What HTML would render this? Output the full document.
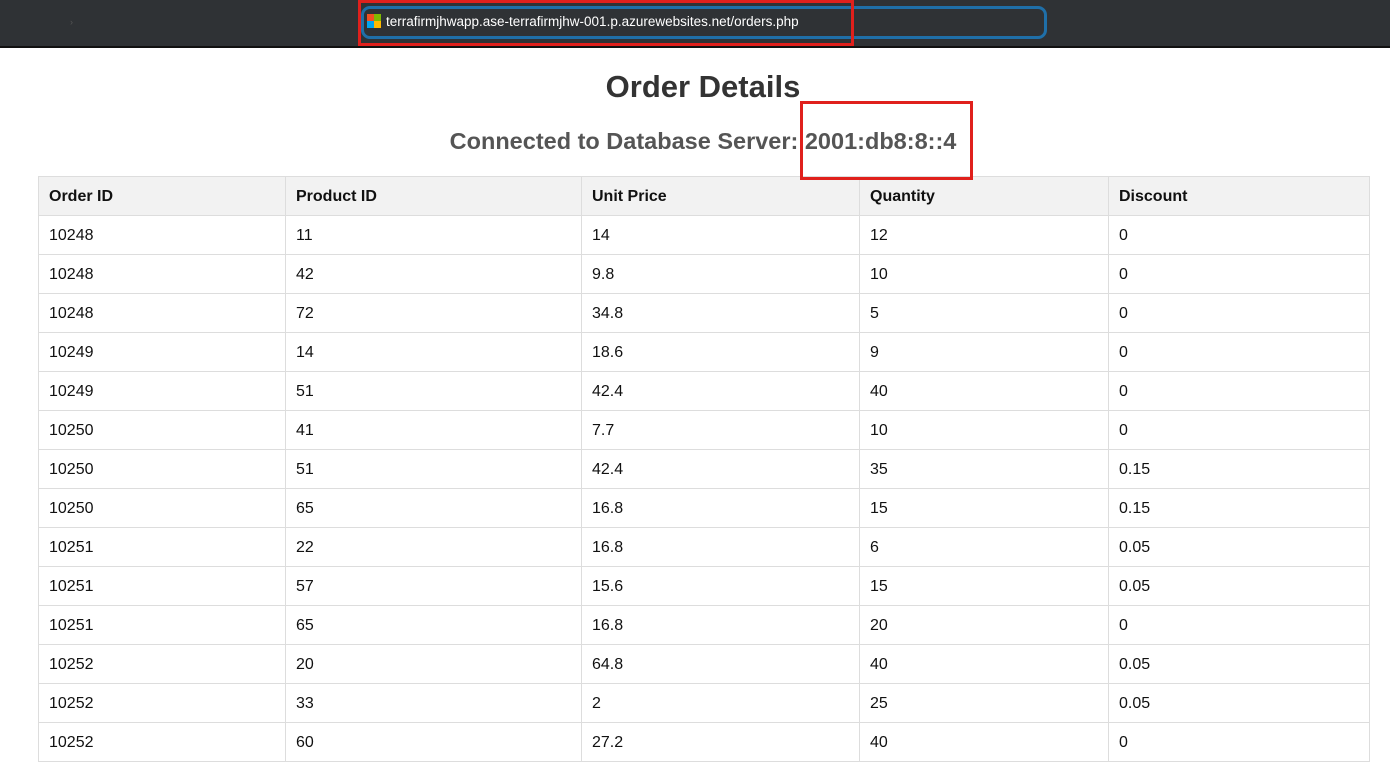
<!DOCTYPE html>
<html><head><meta charset="utf-8"><style>
*{margin:0;padding:0;box-sizing:border-box}
body{width:1390px;height:732px;overflow:hidden;background:#fff;font-family:"Liberation Sans",Arial,sans-serif;position:relative}
.bar{position:absolute;left:0;top:0;width:1390px;height:48px;background:#2f3235;border-bottom:2px solid #111}
.url{position:absolute;left:361px;top:6px;width:686px;height:33px;border:3px solid #1f6fa8;border-radius:9px;background:#2f3235}
.urltext{position:absolute;left:386px;top:14px;color:#fff;font-size:13.5px}
.logo{position:absolute;left:367px;top:14px;width:14px;height:14px}
.logo i{position:absolute;width:7px;height:7px}
.red{position:absolute;border:3px solid #e0201c;z-index:5}
h1{position:absolute;left:0;width:1406px;top:69px;text-align:center;font-size:31px;color:#333;font-weight:bold}
h2{position:absolute;left:0;width:1406px;top:128px;text-align:center;font-size:23.5px;color:#555;font-weight:bold}
table{position:absolute;left:38px;top:176px;width:1332px;border-collapse:collapse;font-size:16px;color:#111}
td,th{border:1px solid #ddd;height:39px;padding:1px 10px 0;text-align:left}
th{background:#f2f2f2;font-weight:bold}
</style></head><body>
<div class="bar"></div>
<div style="position:absolute;left:70px;top:17px;color:#555;font-size:9px">›</div>
<div class="url"></div>
<div class="logo"><i style="left:0;top:0;background:#f25022"></i><i style="left:7px;top:0;background:#7fba00"></i><i style="left:0;top:7px;background:#00a4ef"></i><i style="left:7px;top:7px;background:#ffb900"></i></div>
<div class="urltext">terrafirmjhwapp.ase-terrafirmjhw-001.p.azurewebsites.net/orders.php</div>
<div class="red" style="left:358px;top:0;width:496px;height:46px"></div>
<h1>Order Details</h1>
<h2>Connected to Database Server: 2001:db8:8::4</h2>
<div class="red" style="left:800px;top:101px;width:173px;height:79px"></div>
<table>
<colgroup><col style="width:247px"><col style="width:296px"><col style="width:278px"><col style="width:249px"><col></colgroup>
<tr><th>Order ID</th><th>Product ID</th><th>Unit Price</th><th>Quantity</th><th>Discount</th></tr>
<tr><td>10248</td><td>11</td><td>14</td><td>12</td><td>0</td></tr>
<tr><td>10248</td><td>42</td><td>9.8</td><td>10</td><td>0</td></tr>
<tr><td>10248</td><td>72</td><td>34.8</td><td>5</td><td>0</td></tr>
<tr><td>10249</td><td>14</td><td>18.6</td><td>9</td><td>0</td></tr>
<tr><td>10249</td><td>51</td><td>42.4</td><td>40</td><td>0</td></tr>
<tr><td>10250</td><td>41</td><td>7.7</td><td>10</td><td>0</td></tr>
<tr><td>10250</td><td>51</td><td>42.4</td><td>35</td><td>0.15</td></tr>
<tr><td>10250</td><td>65</td><td>16.8</td><td>15</td><td>0.15</td></tr>
<tr><td>10251</td><td>22</td><td>16.8</td><td>6</td><td>0.05</td></tr>
<tr><td>10251</td><td>57</td><td>15.6</td><td>15</td><td>0.05</td></tr>
<tr><td>10251</td><td>65</td><td>16.8</td><td>20</td><td>0</td></tr>
<tr><td>10252</td><td>20</td><td>64.8</td><td>40</td><td>0.05</td></tr>
<tr><td>10252</td><td>33</td><td>2</td><td>25</td><td>0.05</td></tr>
<tr><td>10252</td><td>60</td><td>27.2</td><td>40</td><td>0</td></tr>
</table>
</body></html>
